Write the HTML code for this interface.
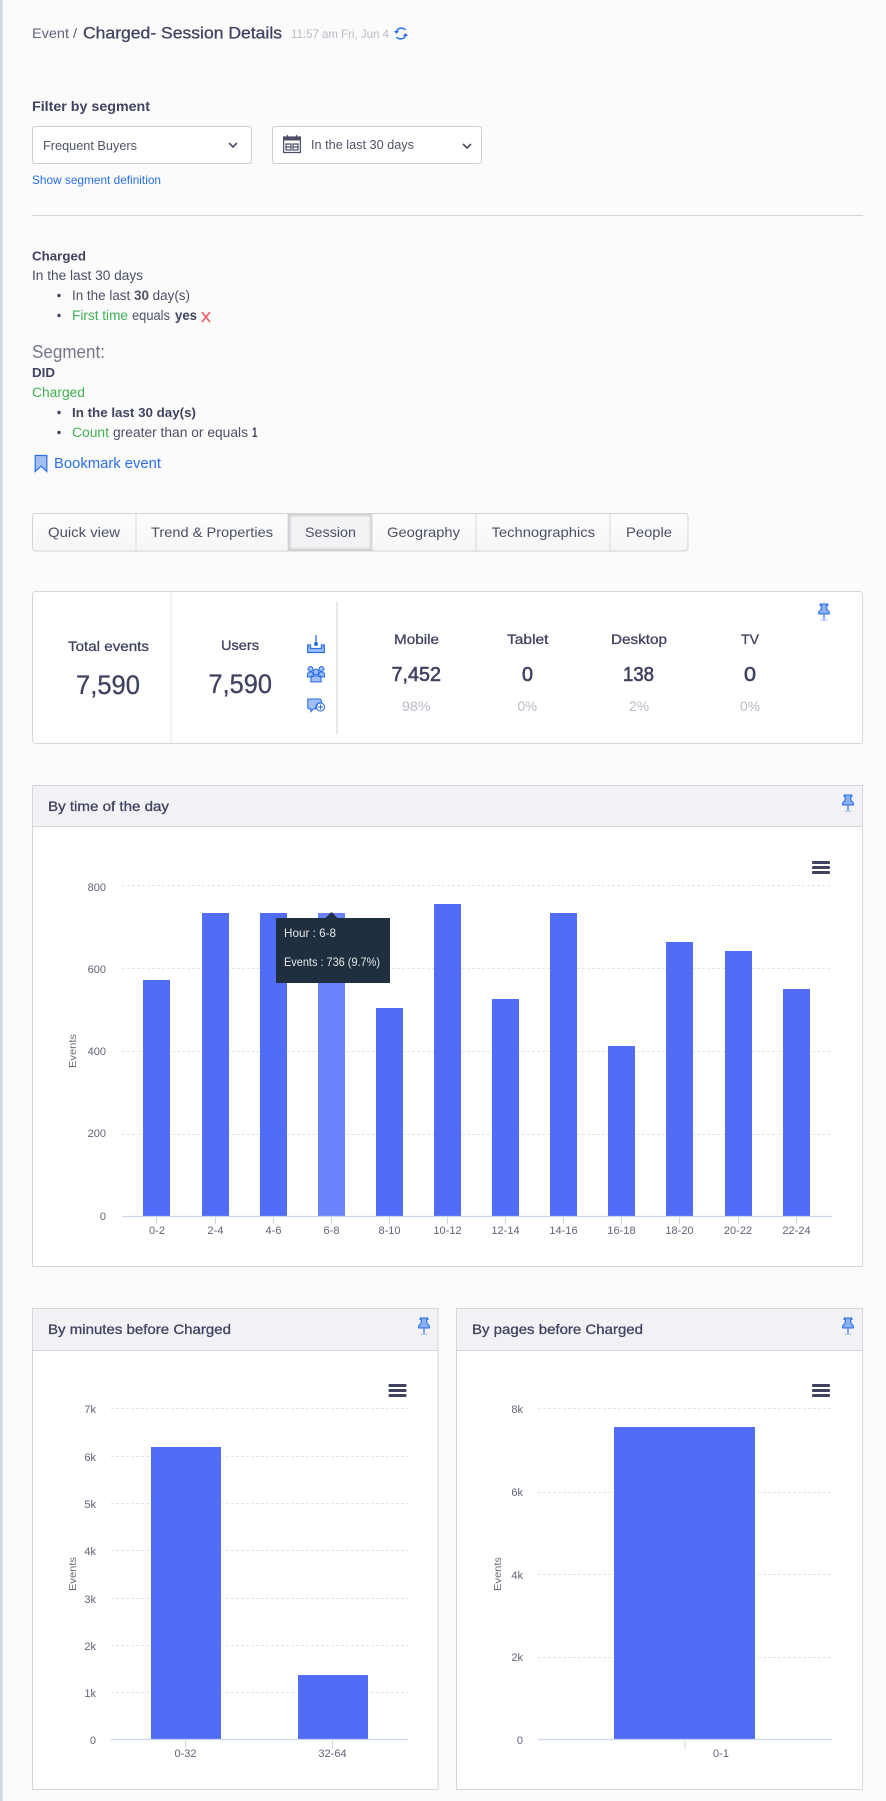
<!DOCTYPE html>
<html lang="en">
<head>
<meta charset="utf-8">
<title>Charged- Session Details</title>
<style>
html,body{margin:0;padding:0;width:886px;height:1801px;background:#fbfbfc;overflow:hidden}
svg{display:block}
text{font-family:"Liberation Sans",sans-serif;fill:#4c5066}
.d{fill:#3f4360}
.med{stroke:#3f4360;stroke-width:.3px}
.b{font-weight:700}
.g{fill:#3fb04f}
.l{fill:#2a6fe8}
.m{fill:#b9bac5}
.t{font-size:11px;fill:#5f6379}
.e{font-size:10.500px;fill:#6a6c78}
.grid{stroke:#e3e4ea;stroke-width:1;stroke-dasharray:3 2}
.ax{stroke:#ccd6eb;stroke-width:1.200}
.tk{stroke:#ccd6eb;stroke-width:1}
.bar{fill:#516cf7}
.card{fill:#fff;stroke:#d6d6d9;stroke-width:1}
.hd{fill:#f1f1f6}
.hl{stroke:#d6d6d9;stroke-width:1}
</style>
</head>
<body>
<svg width="886" height="1801" viewBox="0 0 886 1801" xmlns="http://www.w3.org/2000/svg">
<defs>
<linearGradient id="tabg" x1="0" y1="0" x2="0" y2="1"><stop offset="0" stop-color="#fdfdfd"/><stop offset="1" stop-color="#f6f6f7"/></linearGradient>
<filter id="soft" x="-10%" y="-10%" width="120%" height="120%"><feGaussianBlur stdDeviation="1.200"/></filter>
<clipPath id="ses"><rect x="288.500" y="514" width="83.500" height="36.500"/></clipPath>
<symbol id="pin" viewBox="0 0 12 18">
<path d="M2.200 1H9.800V2.400H8.600L9 6.600L11.300 9V10.900H.7V9L3 6.600L3.400 2.400H2.200Z" fill="#8eb0f3" stroke="#2a6fe8" stroke-width="1.100"/>
<path d="M6 11V16.600" stroke="#2a6fe8" stroke-width="1.100"/>
<path d="M3 17.200H9" stroke="#a9c3f5" stroke-width="1.200"/>
</symbol>
<symbol id="menu" viewBox="0 0 18 13">
<rect y="0" width="18" height="3" rx="1" fill="#3f4360"/>
<rect y="5" width="18" height="3" rx="1" fill="#3f4360"/>
<rect y="10" width="18" height="3" rx="1" fill="#3f4360"/>
</symbol>
</defs>

<rect width="886" height="1801" fill="#fbfbfc"/>
<rect width="2.500" height="1801" fill="#d0d7e3"/>

<!-- Header -->
<text x="32" y="38" font-size="14" textLength="45" lengthAdjust="spacingAndGlyphs" style="fill:#60647a">Event /</text>
<text x="83" y="38.500" font-size="17" textLength="199" lengthAdjust="spacingAndGlyphs" class="d med">Charged- Session Details</text>
<text x="291" y="38" font-size="12" textLength="98" lengthAdjust="spacingAndGlyphs" class="m">11:57 am Fri, Jun 4</text>
<g fill="none" stroke="#2a6fe8" stroke-width="1.500">
<path d="M396.500 31A5.500 5.500 0 0 1 405.500 30"/>
<path d="M405.500 36A5.500 5.500 0 0 1 396.500 37"/>
</g>
<path d="M394 31H399L396.500 34ZM403 36H408L405.500 33Z" fill="#2a6fe8"/>

<!-- Filter -->
<text x="32" y="111" font-size="14" textLength="118" lengthAdjust="spacingAndGlyphs" class="d b">Filter by segment</text>
<rect x="32.500" y="126.500" width="219" height="37" rx="3" fill="#fff" stroke="#cfcfd3"/>
<text x="43" y="150" font-size="13" textLength="94" lengthAdjust="spacingAndGlyphs" style="fill:#4f5369">Frequent Buyers</text>
<path d="M229 143L233 147L237 143" fill="none" stroke="#4a4e66" stroke-width="1.600"/>
<rect x="272.500" y="126.500" width="209" height="37" rx="3" fill="#fff" stroke="#cfcfd3"/>
<g fill="none" stroke="#4a4e66" stroke-width="1.200">
<rect x="283.600" y="137" width="16.800" height="15.500"/>
<path d="M287.500 135V138M296.500 135V138"/>
<path d="M286 144H291V150H286ZM293 144H298V150H293ZM286 147H291M293 147H298"/>
</g>
<rect x="283.600" y="137" width="16.800" height="3.500" fill="#4a4e66"/>
<text x="311" y="149" font-size="13" textLength="103" lengthAdjust="spacingAndGlyphs" style="fill:#4f5369">In the last 30 days</text>
<path d="M463 144L467 148L471 144" fill="none" stroke="#4a4e66" stroke-width="1.600"/>
<text x="32" y="184" font-size="12" textLength="129" lengthAdjust="spacingAndGlyphs" class="l">Show segment definition</text>
<rect x="32" y="215" width="831" height="1" fill="#d5d5d8"/>

<!-- Query -->
<text x="32" y="260.500" font-size="13" textLength="54" lengthAdjust="spacingAndGlyphs" class="d b">Charged</text>
<text x="32" y="280" font-size="13.500" textLength="111" lengthAdjust="spacingAndGlyphs">In the last 30 days</text>
<circle cx="59" cy="295.500" r="1.700" fill="#3f4360"/>
<text x="72" y="300" font-size="13.500" textLength="118" lengthAdjust="spacingAndGlyphs">In the last <tspan class="b">30</tspan> day(s)</text>
<circle cx="59" cy="315.500" r="1.700" fill="#3f4360"/>
<text x="72" y="320" font-size="13.500" textLength="56" lengthAdjust="spacingAndGlyphs" class="g">First time</text>
<text x="132" y="320" font-size="13.500" textLength="38" lengthAdjust="spacingAndGlyphs">equals</text>
<text x="175" y="320" font-size="13.500" textLength="22" lengthAdjust="spacingAndGlyphs" class="d b">yes</text>
<path d="M202 312L210 322M210 312L202 322" stroke="#f0555f" stroke-width="1.500" fill="none"/>

<text x="32" y="358" font-size="18" textLength="73" lengthAdjust="spacingAndGlyphs" style="fill:#73778a">Segment:</text>
<text x="32" y="377" font-size="13" textLength="23" lengthAdjust="spacingAndGlyphs" class="d b">DID</text>
<text x="32" y="397" font-size="13.500" textLength="53" lengthAdjust="spacingAndGlyphs" class="g">Charged</text>
<circle cx="59" cy="412.500" r="1.700" fill="#3f4360"/>
<text x="72" y="417" font-size="13" textLength="124" lengthAdjust="spacingAndGlyphs" class="d b">In the last 30 day(s)</text>
<circle cx="59" cy="432.500" r="1.700" fill="#3f4360"/>
<text x="72" y="437" font-size="13.500" textLength="37" lengthAdjust="spacingAndGlyphs" class="g">Count</text>
<text x="113" y="437" font-size="13.500" textLength="135" lengthAdjust="spacingAndGlyphs">greater than or equals</text>
<text x="252" y="437" font-size="13.500" class="d b" textLength="5.500" lengthAdjust="spacingAndGlyphs">1</text>

<path d="M35.200 455.500H46.800V471.500L41 466.200L35.200 471.500Z" fill="#a3bef5" stroke="#2a6fe8" stroke-width="1.200"/>
<text x="54" y="468" font-size="14.500" textLength="107" lengthAdjust="spacingAndGlyphs" class="l">Bookmark event</text>

<!-- Tabs -->
<rect x="32.500" y="513.500" width="655.500" height="37.500" rx="3" fill="url(#tabg)" stroke="#d3d3d6"/>
<rect x="288.500" y="514" width="83.500" height="36.500" fill="#f3f3f5"/>
<g clip-path="url(#ses)"><rect x="288.500" y="514" width="83.500" height="36.500" fill="none" stroke="#c4c4c8" stroke-width="3" filter="url(#soft)"/></g>
<path d="M136 514V551M288 514V551M372 514V551M476 514V551M610 514V551" stroke="#dadade" stroke-width="1"/>
<g font-size="14">
<text x="48" y="537" textLength="72" lengthAdjust="spacingAndGlyphs">Quick view</text>
<text x="151" y="537" textLength="122" lengthAdjust="spacingAndGlyphs">Trend &amp; Properties</text>
<text x="305" y="537" textLength="51" lengthAdjust="spacingAndGlyphs">Session</text>
<text x="387" y="537" textLength="73" lengthAdjust="spacingAndGlyphs">Geography</text>
<text x="491.500" y="537" textLength="103.500" lengthAdjust="spacingAndGlyphs">Technographics</text>
<text x="626" y="537" textLength="46" lengthAdjust="spacingAndGlyphs">People</text>
</g>

<!-- Stats card -->
<rect x="32.500" y="591.500" width="830" height="152" rx="3" class="card"/>
<path d="M171 592V743" stroke="#e8e8ec"/>
<path d="M337 602V734" stroke="#d2d2d6"/>
<text x="68" y="651" font-size="14" textLength="81" lengthAdjust="spacingAndGlyphs" class="d med">Total events</text>
<text x="76" y="694" font-size="27" textLength="64" lengthAdjust="spacingAndGlyphs" class="d med">7,590</text>
<text x="221" y="650" font-size="14" textLength="38" lengthAdjust="spacingAndGlyphs" class="d med">Users</text>
<text x="208.500" y="693" font-size="27" textLength="63.500" lengthAdjust="spacingAndGlyphs" class="d med">7,590</text>

<!-- action icons -->
<g fill="none" stroke="#2a6fe8" stroke-width="1.300">
<path d="M316 635V645.500"/>
<path d="M307.700 645V652.500H324.300V645H321.500V648.500H310.500V645Z" fill="#a3bef5"/>
</g>
<circle cx="316" cy="644" r="2" fill="#2a6fe8"/>
<g fill="#a3bef5" stroke="#2a6fe8" stroke-width="1.100">
<circle cx="310.500" cy="669" r="2.400"/>
<circle cx="321.500" cy="669" r="2.400"/>
<path d="M307.500 677V673.500L310 672H312L314 676H311L310.500 677Z"/>
<path d="M324.500 677V673.500L322 672H320L318 676H321L321.500 677Z"/>
<circle cx="316" cy="672" r="2.800"/>
<path d="M310.800 681.800V679C310.800 677 313 676 316 676S321.200 677 321.200 679V681.800Z"/>
</g>
<path d="M307.800 699H319.500C320.500 699 321.400 699.800 321.400 701V703A4.500 4.500 0 0 0 316 708.800H313.500L310.800 711.500V708.800H309C308 708.800 307.800 708 307.800 707Z" fill="#a3bef5" stroke="#2a6fe8" stroke-width="1.100"/>
<circle cx="320.500" cy="707" r="4" fill="#fff" stroke="#2a6fe8" stroke-width="1.100"/>
<path d="M318 707H323M320.500 704.500V709.500" stroke="#2a6fe8" stroke-width="1"/>

<g font-size="14">
<text class="d med" x="394" y="644" textLength="45" lengthAdjust="spacingAndGlyphs">Mobile</text>
<text class="d med" x="507" y="644" textLength="41.500" lengthAdjust="spacingAndGlyphs">Tablet</text>
<text class="d med" x="611" y="644" textLength="56" lengthAdjust="spacingAndGlyphs">Desktop</text>
<text class="d med" x="741" y="644" textLength="18" lengthAdjust="spacingAndGlyphs">TV</text>
</g>
<g font-size="20">
<text class="d med" style="stroke-width:.6px" x="391.500" y="681" textLength="49.500" lengthAdjust="spacingAndGlyphs">7,452</text>
<text class="d med" style="stroke-width:.6px" x="522" y="681" textLength="11" lengthAdjust="spacingAndGlyphs">0</text>
<text class="d med" style="stroke-width:.6px" x="623" y="681" textLength="31" lengthAdjust="spacingAndGlyphs">138</text>
<text class="d med" style="stroke-width:.6px" x="744" y="681" textLength="12" lengthAdjust="spacingAndGlyphs">0</text>
</g>
<g font-size="14">
<text class="m" x="402" y="711" textLength="28.500" lengthAdjust="spacingAndGlyphs">98%</text>
<text class="m" x="517.500" y="711" textLength="19.500" lengthAdjust="spacingAndGlyphs">0%</text>
<text class="m" x="629" y="711" textLength="20" lengthAdjust="spacingAndGlyphs">2%</text>
<text class="m" x="740" y="711" textLength="20" lengthAdjust="spacingAndGlyphs">0%</text>
</g>
<use href="#pin" x="818" y="603" width="12" height="18"/>

<!-- By time of the day -->
<rect x="32.500" y="785.500" width="830" height="481" class="card"/>
<rect x="33" y="786" width="829" height="40" class="hd"/>
<path d="M32 826.500H863" class="hl"/>
<text x="48" y="811" font-size="14" textLength="121" lengthAdjust="spacingAndGlyphs" class="d med">By time of the day</text>
<use href="#pin" x="842" y="794" width="12" height="18"/>
<use href="#menu" x="812" y="861" width="18" height="13"/>

<path d="M122 885.500H832M122 968.500H832M122 1051.500H832M122 1134.500H832" class="grid"/>
<g class="bar">
<rect x="143" y="980" width="27" height="236"/>
<rect x="202" y="913" width="27" height="303"/>
<rect x="260" y="913" width="27" height="303"/>
<rect x="318" y="913" width="27" height="303" style="fill:#6b83fa"/>
<rect x="376" y="1008" width="27" height="208"/>
<rect x="434" y="904" width="27" height="312"/>
<rect x="492" y="999" width="27" height="217"/>
<rect x="550" y="913" width="27" height="303"/>
<rect x="608" y="1046" width="27" height="170"/>
<rect x="666" y="942" width="27" height="274"/>
<rect x="725" y="951" width="27" height="265"/>
<rect x="783" y="989" width="27" height="227"/>
</g>
<path d="M122 1216.500H832" class="ax"/>
<path d="M156.500 1217V1224M215.500 1217V1224M273.500 1217V1224M331.500 1217V1224M389.500 1217V1224M447.500 1217V1224M505.500 1217V1224M563.500 1217V1224M621.500 1217V1224M679.500 1217V1224M738.500 1217V1224M796.500 1217V1224" class="tk"/>
<g text-anchor="end">
<text class="t" x="106" y="891">800</text>
<text class="t" x="106" y="973">600</text>
<text class="t" x="106" y="1055">400</text>
<text class="t" x="106" y="1137">200</text>
<text class="t" x="106" y="1220">0</text>
</g>
<g text-anchor="middle">
<text class="t" x="157" y="1234">0-2</text>
<text class="t" x="215.500" y="1234">2-4</text>
<text class="t" x="273.500" y="1234">4-6</text>
<text class="t" x="331.500" y="1234">6-8</text>
<text class="t" x="389.500" y="1234">8-10</text>
<text class="t" x="447.500" y="1234">10-12</text>
<text class="t" x="505.500" y="1234">12-14</text>
<text class="t" x="563.500" y="1234">14-16</text>
<text class="t" x="621.500" y="1234">16-18</text>
<text class="t" x="679.500" y="1234">18-20</text>
<text class="t" x="738" y="1234">20-22</text>
<text class="t" x="796.500" y="1234">22-24</text>
</g>
<text class="e" text-anchor="middle" textLength="34" lengthAdjust="spacingAndGlyphs" transform="translate(76 1051) rotate(-90)">Events</text>

<!-- Tooltip -->
<path d="M276 918H325.500L331.500 912L337.500 918H390V983H276Z" fill="#1f2f40"/>
<text x="284" y="937" font-size="12" textLength="52" lengthAdjust="spacingAndGlyphs" style="fill:#e6e6e6">Hour : 6-8</text>
<text x="284" y="966" font-size="12" textLength="96" lengthAdjust="spacingAndGlyphs" style="fill:#e6e6e6">Events : 736 (9.7%)</text>

<!-- By minutes -->
<rect x="32.500" y="1308.500" width="405.500" height="481" class="card"/>
<rect x="33" y="1309" width="404.500" height="41" class="hd"/>
<path d="M32 1350.500H438" class="hl"/>
<text x="48" y="1334" font-size="14" textLength="183" lengthAdjust="spacingAndGlyphs" class="d med">By minutes before Charged</text>
<use href="#pin" x="418" y="1317" width="12" height="18"/>
<use href="#menu" x="388.500" y="1384" width="18" height="13"/>
<path d="M111 1408.500H408M111 1456.500H408M111 1503.500H408M111 1550.500H408M111 1598.500H408M111 1645.500H408M111 1692.500H408" class="grid"/>
<rect x="149" y="1447" width="74" height="292" fill="#fff"/>
<rect x="296" y="1675" width="74" height="64" fill="#fff"/>
<rect x="151" y="1447" width="70" height="292" class="bar"/>
<rect x="298" y="1675" width="70" height="64" class="bar"/>
<path d="M111 1739.500H408" class="ax"/>
<path d="M185.500 1740V1749M332.500 1740V1749" class="tk"/>
<g text-anchor="end">
<text class="t" x="96" y="1413">7k</text>
<text class="t" x="96" y="1461">6k</text>
<text class="t" x="96" y="1508">5k</text>
<text class="t" x="96" y="1555">4k</text>
<text class="t" x="96" y="1603">3k</text>
<text class="t" x="96" y="1650">2k</text>
<text class="t" x="96" y="1697">1k</text>
<text class="t" x="96" y="1744">0</text>
</g>
<text class="t" x="185.500" y="1757" text-anchor="middle">0-32</text>
<text class="t" x="332.500" y="1757" text-anchor="middle">32-64</text>
<text class="e" text-anchor="middle" textLength="34" lengthAdjust="spacingAndGlyphs" transform="translate(76 1574) rotate(-90)">Events</text>

<!-- By pages -->
<rect x="456.500" y="1308.500" width="406" height="481" class="card"/>
<rect x="457" y="1309" width="405" height="41" class="hd"/>
<path d="M456 1350.500H863" class="hl"/>
<text x="472" y="1334" font-size="14" textLength="171" lengthAdjust="spacingAndGlyphs" class="d med">By pages before Charged</text>
<use href="#pin" x="842" y="1317" width="12" height="18"/>
<use href="#menu" x="812" y="1384" width="18" height="13"/>
<path d="M538 1408.500H832M538 1492.500H832M538 1574.500H832M538 1657.500H832" class="grid"/>
<rect x="612" y="1427" width="145" height="312" fill="#fff"/>
<rect x="614" y="1427" width="141" height="312" class="bar"/>
<path d="M538 1739.500H832" class="ax"/>
<path d="M685 1740V1749" class="tk"/>
<g text-anchor="end">
<text class="t" x="523" y="1413">8k</text>
<text class="t" x="523" y="1496">6k</text>
<text class="t" x="523" y="1579">4k</text>
<text class="t" x="523" y="1661">2k</text>
<text class="t" x="523" y="1744">0</text>
</g>
<text class="t" x="721" y="1757" text-anchor="middle">0-1</text>
<text class="e" text-anchor="middle" textLength="34" lengthAdjust="spacingAndGlyphs" transform="translate(501 1574) rotate(-90)">Events</text>
</svg>
</body>
</html>
